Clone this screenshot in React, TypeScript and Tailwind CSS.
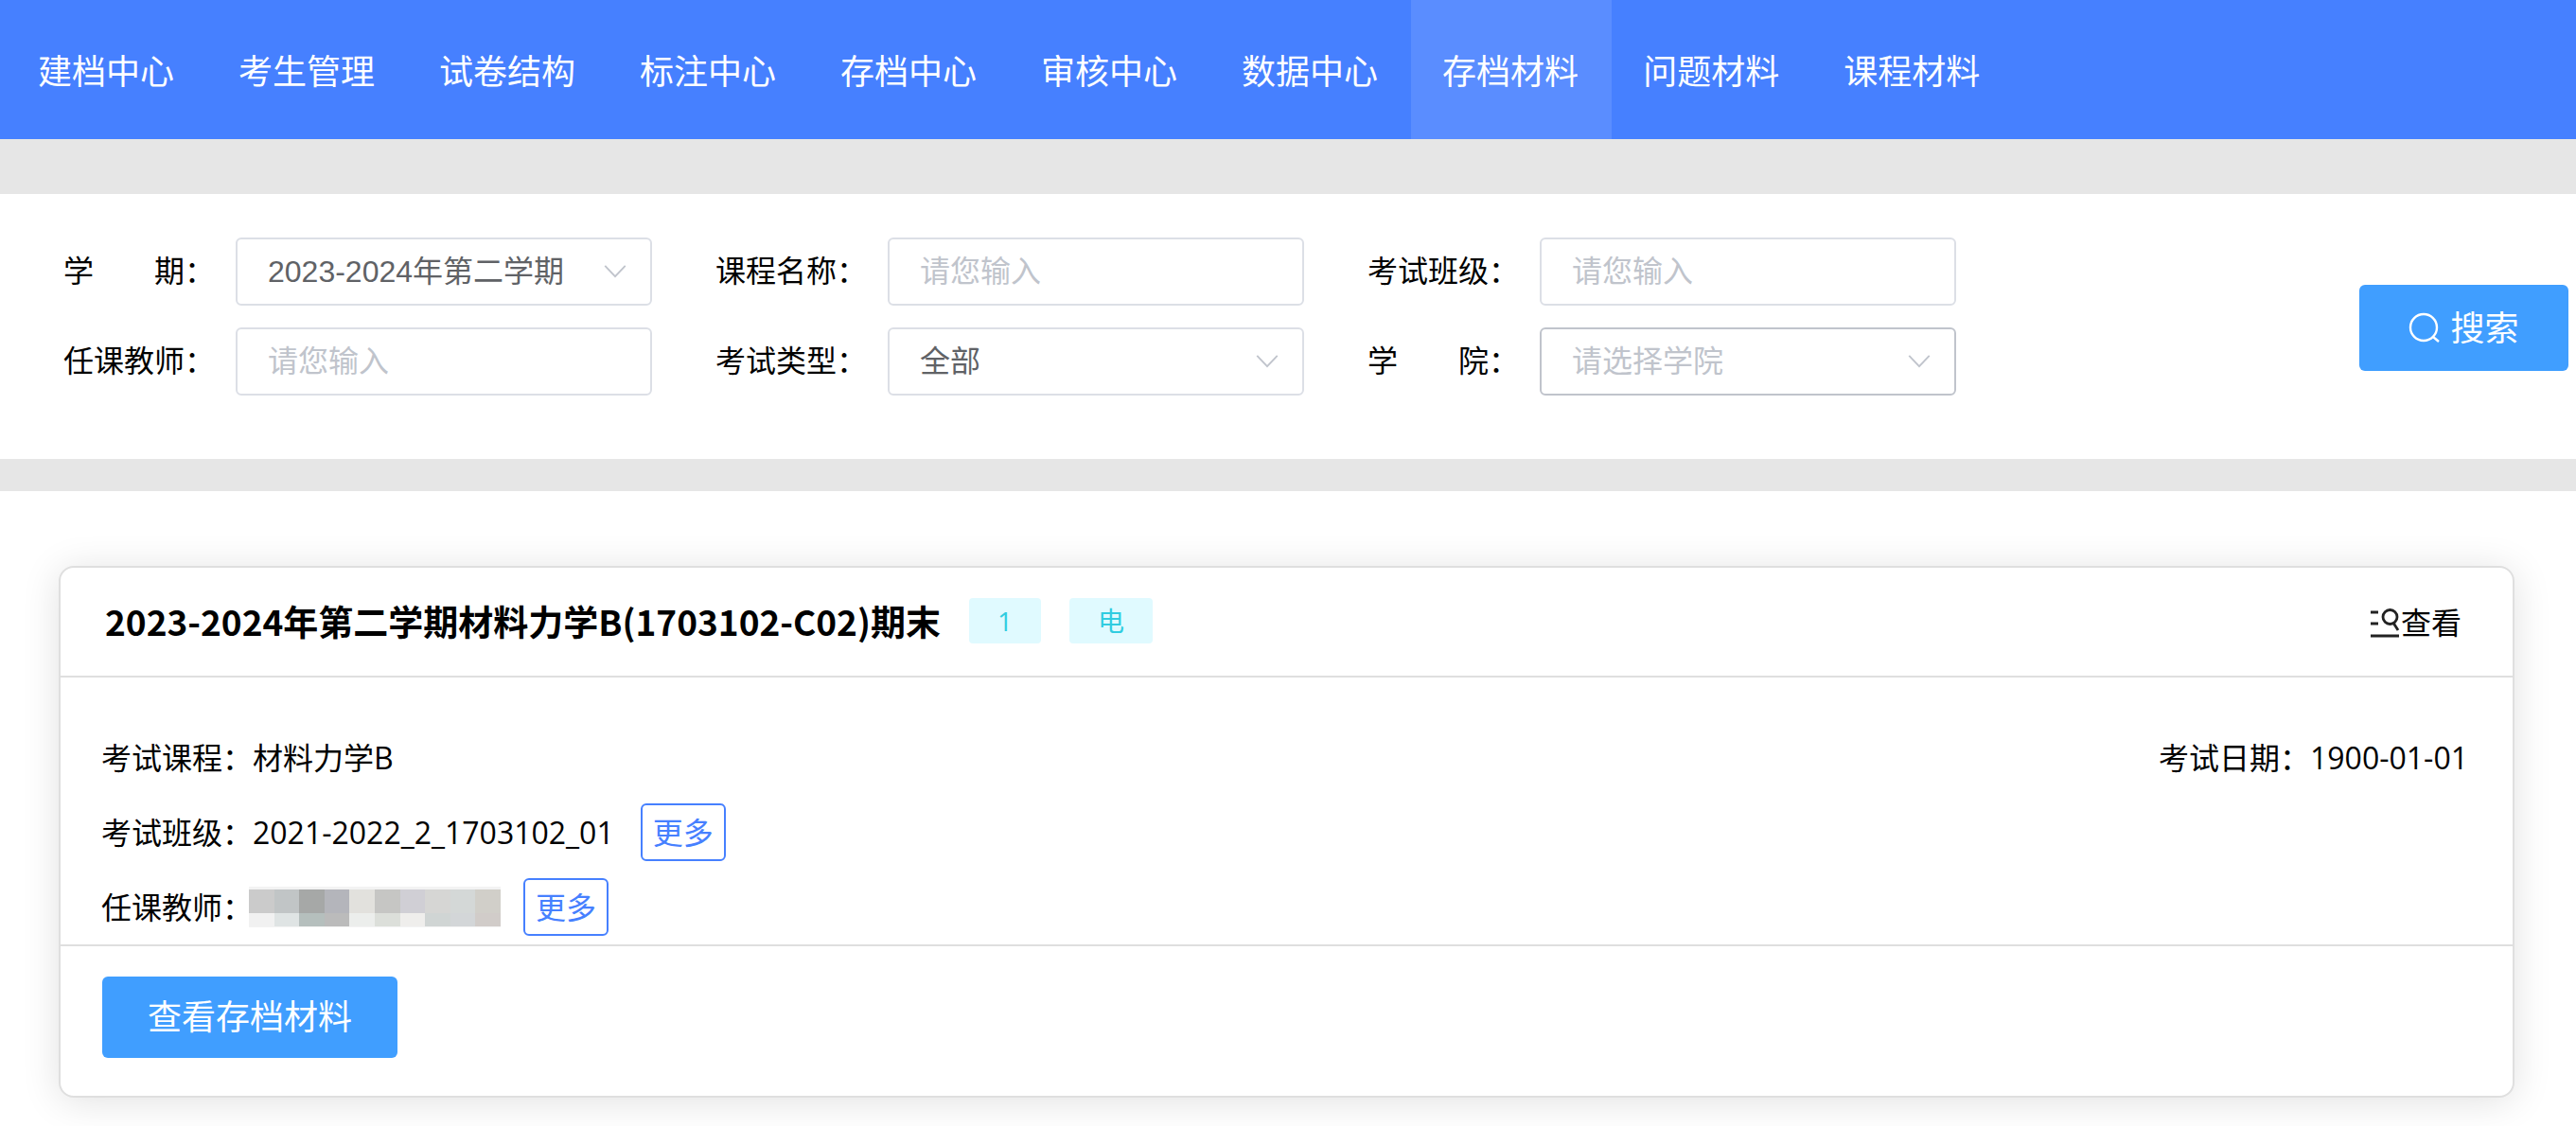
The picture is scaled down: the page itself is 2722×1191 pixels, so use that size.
import React, { useState } from 'react'

const navItems = [
  '建档中心',
  '考生管理',
  '试卷结构',
  '标注中心',
  '存档中心',
  '审核中心',
  '数据中心',
  '存档材料',
  '问题材料',
  '课程材料',
]

const mosaicTop = ['#cbcbcb', '#c1c5c6', '#a6a8a7', '#b4b5bb', '#e2e1dd', '#c6c6c4', '#d0cfd5', '#d6d6d4', '#d4d8d7', '#d1cfc9']
const mosaicBottom = ['#f1f1f1', '#dfe4e4', '#b5bfbd', '#bbbbbb', '#eceeec', '#dcdfda', '#efeeec', '#d0d5d4', '#d3d6d8', '#d1ccc9']

const fieldClass = 'h-[72px] w-[440px] rounded-md border-2 bg-white px-8 text-[32px] text-[#606266] outline-none placeholder:text-[#c0c4cc] placeholder:opacity-100'

type FieldProps = {
  id: string
  label: string
}

const FieldLabel = ({ id, label }: FieldProps) => (
  <label htmlFor={id} className="w-[182px] whitespace-pre">{label}</label>
)

const TextField = ({ id, label }: FieldProps) => (
  <div className="flex items-center">
    <FieldLabel id={id} label={label} />
    <input id={id} type="text" placeholder="请您输入" className={`${fieldClass} border-[#dcdfe6]`} />
  </div>
)

type SelectFieldProps = FieldProps & {
  options: string[]
  placeholder?: string
  active?: boolean
}

const SelectField = ({ id, label, options, placeholder, active }: SelectFieldProps) => {
  const [value, setValue] = useState(placeholder ? '' : options[0])

  return (
    <div className="flex items-center">
      <FieldLabel id={id} label={label} />
      <div className="relative">
        <select
          id={id}
          value={value}
          onChange={(e) => setValue(e.target.value)}
          className={`${fieldClass} block appearance-none ${active ? 'border-[#c0c4cc]' : 'border-[#dcdfe6]'} ${value === '' ? 'text-[#c0c4cc]' : ''}`}
        >
          {placeholder && <option value="">{placeholder}</option>}
          {options.map((option) => (
            <option key={option} value={option}>{option}</option>
          ))}
        </select>
        <svg
          className="pointer-events-none absolute top-[29px] right-[27px] h-[14px] w-[24px]"
          viewBox="0 0 25 15"
          fill="none"
          stroke="#c0c4cc"
          strokeWidth="2"
        >
          <path d="M1 1 L12.5 13 L24 1" />
        </svg>
      </div>
    </div>
  )
}

const SearchIcon = () => (
  <svg className="h-9 w-9" viewBox="0 0 36 36" fill="none" stroke="currentColor" strokeWidth="2.4">
    <circle cx="16" cy="17" r="14" />
    <path d="M26 27 L32 32" />
  </svg>
)

const ViewIcon = () => (
  <svg className="h-8 w-8" viewBox="0 0 32 32" fill="none" stroke="#222" strokeWidth="2.8">
    <path d="M1 5 H9 M1 17 H9 M1 30 H31" />
    <circle cx="21.5" cy="10" r="7.5" />
    <path d="M25.5 17 L30 24" />
  </svg>
)

const MoreButton = () => (
  <button type="button" className="h-[61px] w-[90px] rounded-md border-2 border-[#4680ff] text-[#4680ff]">
    更多
  </button>
)

const Mosaic = () => (
  <svg className="h-[43px] w-[266px]" viewBox="0 0 266 43" preserveAspectRatio="none" shapeRendering="crispEdges">
    <rect width="266" height="43" fill="#f3f3f3" />
    {mosaicTop.map((color, i) => (
      <rect key={i} x={i * 26.6} y="3" width="26.6" height="25" fill={color} />
    ))}
    {mosaicBottom.map((color, i) => (
      <rect key={i} x={i * 26.6} y="28" width="26.6" height="14" fill={color} />
    ))}
  </svg>
)

const App = () => {
  return (
    <div className="bg-white font-['Open_Sans','Noto_Sans_CJK_SC',sans-serif] text-[32px] leading-[48px] text-black">

      <nav className="flex h-[147px] bg-[#4680ff] pl-[7px] text-4xl">
        {navItems.map((item) => (
          <a
            key={item}
            href="#"
            className={`flex items-center pt-1 pr-[35px] pl-[33px] whitespace-nowrap text-white ${item === '存档材料' ? 'bg-[#5a8dff]' : ''}`}
          >
            {item}
          </a>
        ))}
      </nav>

      <div className="h-[58px] bg-[#e6e6e6]"></div>

      <form
        className="flex items-center justify-between pt-[46px] pr-2 pb-[67px] pl-[67px]"
        onSubmit={(e) => e.preventDefault()}
      >
        <div className="grid grid-cols-[auto_auto_auto] gap-x-[67px] gap-y-[23px] font-['Liberation_Sans','Noto_Sans_CJK_SC',sans-serif]">
          <SelectField id="term" label={'学\u3000\u3000期：'} options={['2023-2024年第二学期']} />
          <TextField id="course" label="课程名称：" />
          <TextField id="examClass" label="考试班级：" />
          <TextField id="teacher" label="任课教师：" />
          <SelectField id="examType" label="考试类型：" options={['全部']} />
          <SelectField id="college" label={'学\u3000\u3000院：'} options={[]} placeholder="请选择学院" active />
        </div>
        <button type="submit" className="mt-6 flex h-[91px] w-[221px] items-center justify-center gap-2 rounded-md bg-[#409eff] text-4xl text-white">
          <SearchIcon />
          搜索
        </button>
      </form>

      <div className="h-[34px] bg-[#e6e6e6]"></div>

      <main className="pt-[79px] pr-[65px] pb-[30px] pl-[62px]">
        <section className="rounded-2xl border-2 border-[#dfdfdf] bg-white shadow-[0_4px_40px_rgba(0,0,0,0.12)]">
          <header className="flex h-[116px] items-center border-b-2 border-[#dfdfdf] pr-[54px] pb-0.5 pl-[47px]">
            <h2 className="font-['Noto_Sans_CJK_SC',sans-serif] text-[37px] font-bold">2023-2024年第二学期材料力学B(1703102-C02)期末</h2>
            <span className="ml-[30px] flex h-12 items-center rounded-sm bg-[#e0faff] px-[30px] text-[28px] text-[#31cce0]">1</span>
            <span className="ml-[30px] flex h-12 items-center rounded-sm bg-[#e0faff] px-[30px] text-[28px] text-[#31cce0]">电</span>
            <a href="#" className="ml-auto flex items-center gap-px pt-1">
              <ViewIcon />
              查看
            </a>
          </header>

          <div className="flex justify-between border-b-2 border-[#dfdfdf] pt-[45px] pr-[47px] pl-[43px]">
            <div>
              <div className="flex h-[79px] items-center">考试课程：材料力学B</div>
              <div className="flex h-[79px] items-center">
                <span className="mr-7">考试班级：2021-2022_2_1703102_01</span>
                <MoreButton />
              </div>
              <div className="flex h-[79px] items-center">
                <span className="-mr-1">任课教师：</span>
                <span className="mr-6"><Mosaic /></span>
                <MoreButton />
              </div>
            </div>
            <div className="flex h-[79px] items-center">考试日期：1900-01-01</div>
          </div>

          <footer className="px-11 pt-8 pb-10">
            <button type="button" className="block h-[86px] rounded-md bg-[#409eff] px-12 text-4xl text-white">
              查看存档材料
            </button>
          </footer>
        </section>
      </main>

    </div>
  )
}

export default App
